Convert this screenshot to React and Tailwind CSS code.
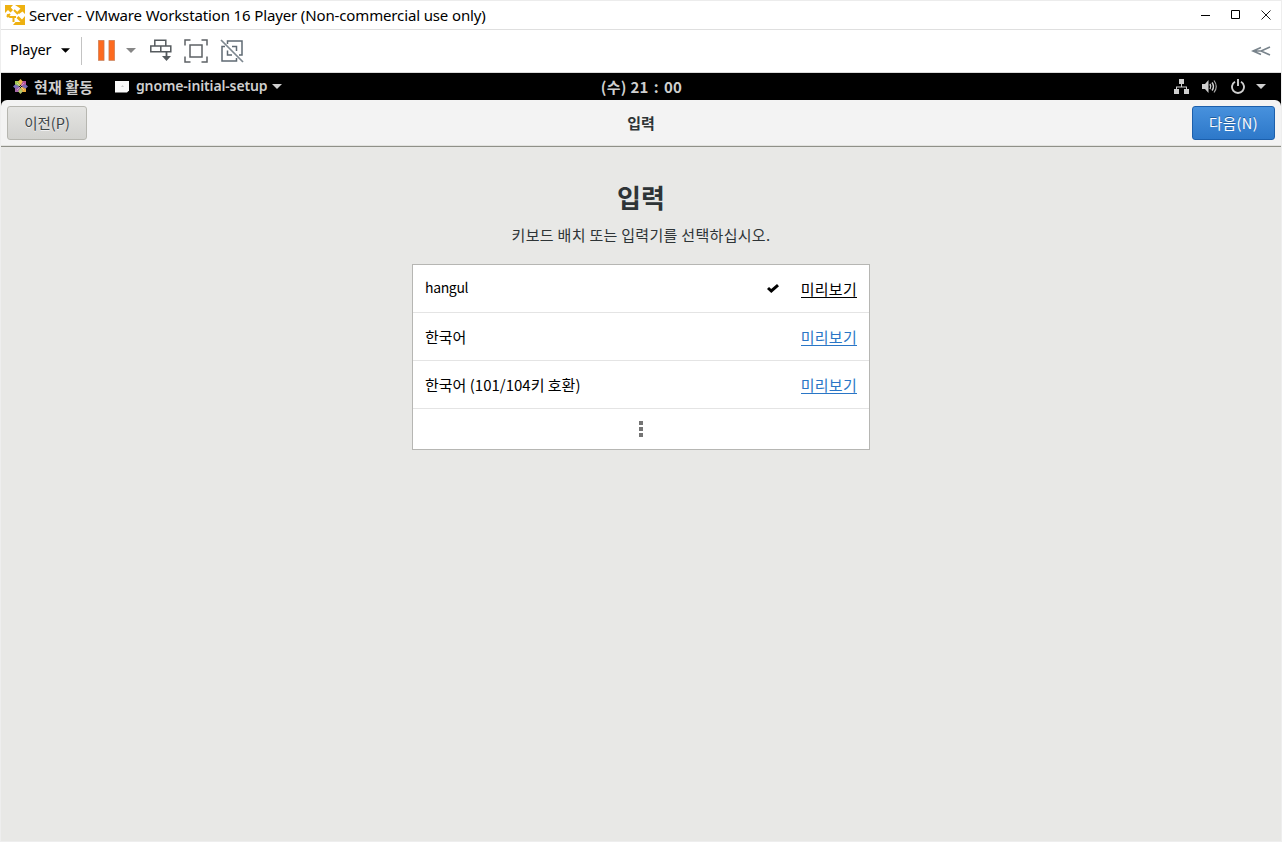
import { useState } from 'react'

const LAYOUTS = [
  { id: 'hangul', name: 'hangul' },
  { id: 'kr', name: '한국어' },
  { id: 'kr104', name: '한국어 (101/104키 호환)' },
]

function VmwareIcon() {
  return (
    <svg className="w-5 h-5 shrink-0" viewBox="0 0 20 20" fill="#eeb111" stroke="#eeb111">
      <path d="M0 0h8L5.800 2.500 8 5 5.500 7.500 3 5 0 8zM10 0h10v9l-2.500-2.500L14 9l-2-2 3.500-3.500zM20 11v9H8l2.500-3h5l-4-4 2-2 3.500 3.500z" stroke="none" />
      <path d="M9 5l4 4M2 9.500l3 2.500h4.500M5 9l-3 3M11 12H8.500v5" fill="none" strokeWidth="2" />
    </svg>
  )
}

function CentosIcon() {
  return (
    <svg className="w-[15px] h-[15px] shrink-0" viewBox="0 0 15 15">
      <path d="M2 2h5v5H2z" fill="#a3c753" />
      <path d="M8 2h5v5H8z" fill="#b5539c" />
      <path d="M2 8h5v5H2z" fill="#a566a8" />
      <path d="M8 8h5v5H8z" fill="#e9a83a" />
      <path d="M7.500 0l2.300 2.500-2.300 4-2.300-4z" fill="#f0bb4a" />
      <path d="M15 7.500l-2.500 2.300-4-2.300 4-2.300z" fill="#7a6cb4" />
      <path d="M7.500 15l-2.300-2.500 2.300-4 2.300 4z" fill="#b3c46a" />
      <path d="M0 7.500l2.500-2.300 4 2.300-4 2.300z" fill="#7d72bb" />
      <path d="M4 4l7 7M11 4l-7 7" stroke="#efe6e6" strokeWidth=".5" />
    </svg>
  )
}

function Caret({ className }) {
  return (
    <svg className={className} viewBox="0 0 10 5" fill="currentColor">
      <path d="M0 0h10L5 5z" />
    </svg>
  )
}

function TitleBar() {
  return (
    <div className="h-[30px] bg-white border-t border-b border-t-[#ececec] border-b-[#dfdfdf] flex items-center shrink-0">
      <div className="pl-1 flex items-center">
        <VmwareIcon />
        <span className="ml-1 text-[15px] leading-5 tracking-[-0.135px] text-black whitespace-nowrap font-['Noto_Sans','Noto_Sans_CJK_KR',sans-serif]">
          Server - VMware Workstation 16 Player (Non-commercial use only)
        </span>
      </div>
      <div className="ml-auto flex items-center pr-2.5 gap-5 text-black">
        <svg className="w-2.5 h-2.5" viewBox="0 0 10 10" stroke="currentColor"><path d="M0 5.500h9" /></svg>
        <svg className="w-2.5 h-2.5" viewBox="0 0 10 10" fill="none" stroke="currentColor"><path d="M.5.5h8v8h-8z" /></svg>
        <svg className="w-2.5 h-2.5" viewBox="0 0 10 10" fill="none" stroke="currentColor"><path d="M.5.5l9 9M9.500.5l-9 9" strokeWidth=".9" /></svg>
      </div>
    </div>
  )
}

function PlayerToolbar() {
  return (
    <div className="h-[43px] pb-px bg-white border-b border-[#dcdcdc] flex items-center shrink-0">
      <span className="ml-[9px] mb-1 w-[42px] text-[14.5px] leading-5 tracking-[-0.15px] text-black font-['Noto_Sans',sans-serif]">Player</span>
      <Caret className="ml-[9px] w-[9px] h-[5px] text-black" />
      <div className="ml-[11px] w-px h-7 bg-[#c3c3c3]" />
      <svg className="ml-4 w-[17px] h-[21px]" viewBox="0 0 17 21" fill="#fd6a1f" stroke="#b67e5e" strokeWidth=".6">
        <path d="M.3.300h5.800v20.300H.3zM10.900.300h5.800v20.300h-5.800z" />
      </svg>
      <Caret className="ml-[11px] w-[10px] h-[5px] text-[#868686]" />
      {/* send ctrl+alt+del */}
      <svg className="ml-[14px] w-[22px] h-[23px]" viewBox="0 0 22 23" fill="none" stroke="#555a5e" strokeWidth="1.500">
        <path d="M4.800 1.300h11v5.700h-11zM.8 7h10v5.800H.8zM10.800 7h10v5.800h-10z" />
        <path d="M16.500 12v7" strokeWidth="1.800" />
        <path d="M12 17h9l-4.500 5z" fill="#555a5e" stroke="none" />
      </svg>
      {/* full screen */}
      <svg className="ml-3 w-6 h-6" viewBox="0 0 24 24" fill="none" stroke="#5e6265" strokeWidth="1.500">
        <path d="M1 6.500V1h5.500M17.500 1H23v5.500M23 17.500V23h-5.500M6.500 23H1v-5.500" />
        <path d="M6 6h12v12H6z" />
      </svg>
      {/* unity */}
      <svg className="ml-3 w-6 h-6" viewBox="0 0 24 24" fill="none" stroke="#5f6a73" strokeWidth="1.500">
        <path d="M7.500 5V2H22v14h-3M12 7.500h4.500V12" />
        <path d="M5 7.500H2V22h14.500v-3M7.500 11.500V16H12" />
        <path d="M1 1l22 22" stroke="#7e8890" strokeWidth="1.700" />
      </svg>
      <svg className="ml-auto mr-2.5 w-5 h-2.5" viewBox="0 0 20 10" fill="none" stroke="#78838b" strokeWidth="1.600">
        <path d="M10 1.500L2 5l8 3.500M19 1L10 5l9 4M2 5h8" />
      </svg>
    </div>
  )
}

function GnomeTopBar() {
  return (
    <div className="h-[27px] bg-black text-[#cfcfcf] grid grid-cols-[1fr_auto_1fr] items-center text-sm font-bold shrink-0">
      <div className="flex items-center pl-3">
        <CentosIcon />
        <span className="ml-1.5 w-[61px] text-[15px] leading-5 tracking-[0.1px] whitespace-nowrap">현재 활동</span>
        <svg className="ml-5 w-[14px] h-[13px]" viewBox="0 0 14 13">
          <path d="M0 1h14v9.500L12 12.500H0z" fill="#fafafa" />
          <path d="M6 7l1.500-2L9 7z" fill="#ccc" />
        </svg>
        <span className="ml-[7px] mb-0.5 w-[132px] text-[14px] leading-5 tracking-[-0.14px] font-semibold whitespace-nowrap font-['Noto_Sans',sans-serif]">gnome-initial-setup</span>
        <Caret className="ml-1 w-[10px] h-[5px]" />
      </div>
      <span className="pl-px text-[15px] leading-5 tracking-[0.3px] whitespace-nowrap">
        (수) 21<span className="mx-[5px]">:</span>00
      </span>
      <div className="flex items-center justify-end pr-[15px]">
        <svg className="w-[15px] h-[15px]" viewBox="0 0 15 15" fill="currentColor">
          <path d="M5 0h5v5H5zM0 10h5v5H0zM10 10h5v5h-5zM7 5h1v2.500h5V10h-1V8.500H3V10H2V7.500h5z" />
        </svg>
        <svg className="ml-[13px] w-[15px] h-[15px]" viewBox="0 0 15 15" fill="none" stroke="currentColor">
          <path d="M0 5h3l3.500-4v13L3 10H0z" fill="currentColor" stroke="none" />
          <path d="M8 5q1.500 2.500 0 5M10 3.500q3 4 0 8" strokeWidth="1.500" />
          <path d="M12 1.500q4.500 6 0 12" strokeWidth="1.200" opacity=".8" />
        </svg>
        <svg className="ml-[14px] w-[14px] h-[15px]" viewBox="0 0 14 15" fill="none" stroke="currentColor" strokeWidth="1.900">
          <path d="M4 2.800a6 6 0 1 0 6 0M7 0v7" />
        </svg>
        <Caret className="ml-[11px] w-[10px] h-[5px]" />
      </div>
    </div>
  )
}

function HeaderBar() {
  return (
    <div className="bg-black shrink-0">
      <div className="h-[47px] rounded-t-[6px] bg-[#f3f3f3] border-b border-[#8f9088] shadow-[inset_0_-1px_0_#e2e2df] px-1.5 grid grid-cols-[1fr_auto_1fr] items-center">
        <button className="w-20 h-[34px] rounded-[3px] border border-[#b6b6b0] bg-linear-to-b from-[#e4e4e2] to-[#d2d2cf] text-[14.500px] text-[#3c4446] [text-shadow:0_1px_#f0f0f0]">
          이전(P)
        </button>
        <h1 className="text-[15px] leading-5 font-bold text-[#2e3436]">입력</h1>
        <button className="justify-self-end w-[83px] h-[34px] rounded-[3px] border border-[#1c5fab] bg-linear-to-b from-[#4791dd] to-[#2d78c9] text-[14.500px] tracking-[0.4px] text-white [text-shadow:0_-1px_#235f9f]">
          다음(N)
        </button>
      </div>
    </div>
  )
}

function CheckIcon() {
  return (
    <svg className="w-3 h-[9px]" viewBox="0 0 12 9" fill="none" stroke="#000" strokeWidth="3">
      <path d="M1 4l3.300 3L11 1.200" />
    </svg>
  )
}

export default function App() {
  const [selected, setSelected] = useState('hangul')

  return (
    <div className="w-[1282px] h-[842px] flex flex-col overflow-hidden border-x border-b border-[#eeeeee] bg-[#e8e8e6] font-['Noto_Sans_CJK_KR',sans-serif]">
      <TitleBar />
      <PlayerToolbar />
      <GnomeTopBar />
      <HeaderBar />

      <main className="flex-1 flex flex-col items-center pt-[30px] text-[#2e3436]">
        <h2 className="text-[26px] leading-10 font-bold">입력</h2>
        <p className="mt-2 text-[15px] leading-5 tracking-[0.3px] whitespace-nowrap">키보드 배치 또는 입력기를 선택하십시오.</p>

        <div className="mt-[19px] w-[458px] bg-white border border-[#b6b6b3]">
          {LAYOUTS.map((layout) => (
            <div key={layout.id} onClick={() => setSelected(layout.id)}
              className="h-12 px-3 border-b border-[#e4e4e4] flex items-center text-[15px] leading-5 text-black">
              <span className={layout.id === 'hangul' ? 'mb-1 text-[14px] tracking-[-0.35px]' : ''}>{layout.name}</span>
              <div className="ml-auto flex items-center gap-[22px]">
                {selected === layout.id && <CheckIcon />}
                <a className={selected === layout.id ? 'border-b border-black leading-[17px] tracking-[0.28px]' : 'border-b border-[#2a76c6] text-[#2a76c6] leading-[17px] tracking-[0.28px]'}>
                  미리보기
                </a>
              </div>
            </div>
          ))}
          <div className="h-10 flex flex-col items-center justify-center gap-0.5">
            <i className="w-1 h-1 bg-[#747474]" />
            <i className="w-1 h-1 bg-[#747474]" />
            <i className="w-1 h-1 bg-[#747474]" />
          </div>
        </div>
      </main>
    </div>
  )
}
